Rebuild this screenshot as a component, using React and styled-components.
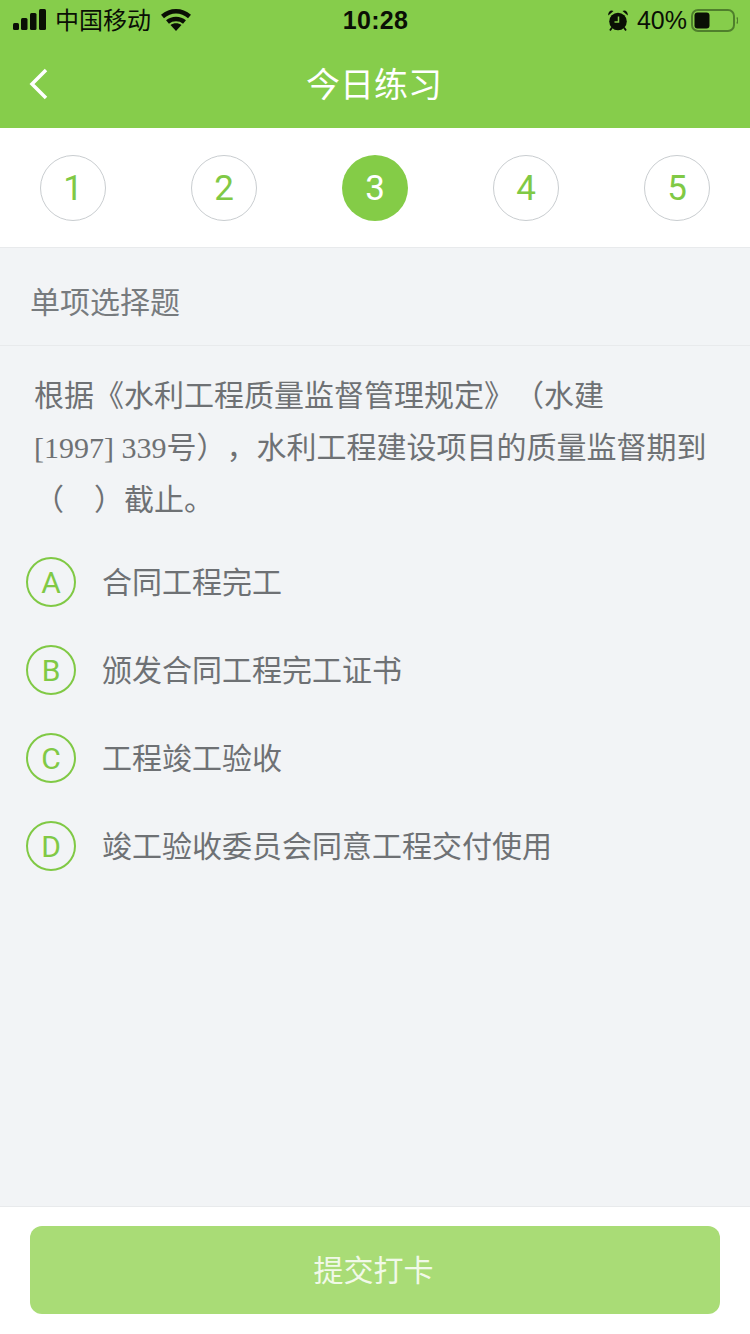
import React from "react";
import styled, { createGlobalStyle } from "styled-components";

const GlobalStyle = createGlobalStyle`
	html, body {
		margin: 0;
		padding: 0;
		background: #f2f4f6;
	}
	body {
		font-family: "Liberation Sans", "Noto Sans CJK SC", sans-serif;
		text-spacing-trim: space-all;
	}
`;

const Page = styled.div`
	width: 750px;
	height: 1334px;
	display: flex;
	flex-direction: column;
	background: #f2f4f6;
	overflow: hidden;
`;

const Header = styled.header`
	height: 128px;
	flex: none;
	background: #86cd4b;
	display: flex;
	flex-direction: column;
`;

const StatusBar = styled.div`
	height: 40px;
	display: grid;
	grid-template-columns: 1fr auto 1fr;
	align-items: center;
	padding: 0 12px 0 13px;
	color: #0a0f05;
`;

const StatusLeft = styled.div`
	display: flex;
	align-items: center;
	gap: 9px;
	font-size: 24px;
`;

const Carrier = styled.span`
	padding-bottom: 4px;
	margin-right: 1px;
`;

const StatusRight = styled.div`
	display: flex;
	align-items: center;
	justify-content: flex-end;
	font-size: 25px;
`;

const Percent = styled.span`
	margin: 0 4px 0 9px;
`;

const Clock = styled.div`
	font-size: 25px;
	font-weight: 700;
	letter-spacing: 0.3px;
`;

const NavBar = styled.div`
	flex: 1;
	position: relative;
	display: flex;
	align-items: center;
	justify-content: center;
	padding: 0 2px 4px 0;
`;

const BackButton = styled.svg`
	position: absolute;
	left: 28px;
	top: 28px;
`;

const Title = styled.h1`
	margin: 0;
	font-size: 34px;
	font-weight: 400;
	color: #fff;
`;

const Steps = styled.div`
	height: 120px;
	flex: none;
	box-sizing: border-box;
	background: #fff;
	border-bottom: 1px solid #e8eaec;
	display: flex;
	align-items: center;
	justify-content: space-between;
	padding: 1px 40px 0;
`;

const Step = styled.div`
	width: 66px;
	height: 66px;
	box-sizing: border-box;
	border-radius: 50%;
	border: ${(p) => (p.$active ? "none" : "1px solid #c9cdd0")};
	background: ${(p) => (p.$active ? "#84cc47" : "#fff")};
	color: ${(p) => (p.$active ? "#fff" : "#80c945")};
	display: flex;
	align-items: center;
	justify-content: center;
	font-family: Roboto, "Liberation Sans", sans-serif;
	font-size: 35px;
	font-weight: 400;
`;

const SectionLabel = styled.div`
	height: 98px;
	flex: none;
	box-sizing: border-box;
	border-bottom: 1px solid #e8eaec;
	padding: 7px 30px 0;
	display: flex;
	align-items: center;
	font-size: 30px;
	color: #777b7e;
`;

const Question = styled.p`
	margin: 0;
	padding: 24px 34px 0;
	font-family: "Liberation Serif", "Noto Sans CJK SC", serif;
	font-size: 30px;
	line-height: 52px;
	color: #6e7174;
`;

const Options = styled.div`
	display: flex;
	flex-direction: column;
	gap: 38px;
	padding: 31px 26px 0;
`;

const Option = styled.div`
	display: flex;
	align-items: center;
	gap: 26px;
	height: 50px;
`;

const Letter = styled.div`
	width: 50px;
	height: 50px;
	box-sizing: border-box;
	border: 2px solid #80c945;
	border-radius: 50%;
	color: #80c945;
	display: flex;
	align-items: center;
	justify-content: center;
	font-family: Roboto, "Liberation Sans", sans-serif;
	font-size: 30px;
	font-weight: 400;
`;

const OptionText = styled.div`
	font-size: 30px;
	color: #6e7174;
	padding-bottom: 4px;
`;

const Footer = styled.footer`
	margin-top: auto;
	height: 128px;
	flex: none;
	box-sizing: border-box;
	background: #fff;
	border-top: 1px solid #e8eaec;
	padding: 19px 30px 0;
`;

const SubmitButton = styled.button`
	width: 100%;
	height: 88px;
	border: none;
	border-radius: 12px;
	background: #a9dc76;
	color: #f1f9e8;
	font-family: inherit;
	font-size: 30px;
	padding: 0 3px 4px 0;
`;

const steps = [1, 2, 3, 4, 5];
const options = [
	["A", "合同工程完工"],
	["B", "颁发合同工程完工证书"],
	["C", "工程竣工验收"],
	["D", "竣工验收委员会同意工程交付使用"],
];

function SignalIcon() {
	return (
		<svg width="33" height="22" viewBox="0 0 33 22" fill="#0a0f05">
			<rect x="0" y="14" width="6" height="7" rx="1.5" />
			<rect x="8" y="9" width="6.500" height="12" rx="1.5" />
			<rect x="17" y="4" width="6.500" height="17" rx="1.5" />
			<rect x="26" y="0" width="7" height="21" rx="1.5" />
		</svg>
	);
}

function WifiIcon() {
	return (
		<svg width="30" height="22" viewBox="0 0 30 22" fill="none" stroke="#0a0f05" strokeWidth="4.500">
			<path d="M1.500 7.500C9.500.5 20.500.5 28.500 7.500" />
			<path d="M6.500 13c4.800-4 12.200-4 17 0" />
			<path d="M15 22l-5.500-6c3-2.200 8-2.200 11 0z" fill="#0a0f05" stroke="none" />
		</svg>
	);
}

function AlarmIcon() {
	return (
		<svg width="20" height="21" viewBox="0 0 20 21" fill="#0a0f05">
			<circle cx="10" cy="11.500" r="8.800" />
			<path d="M.3 5.500 5.500 1C2.800-.8-.3 1.800.3 5.500zM19.700 5.500 14.500 1C17.200-.8 20.300 1.800 19.700 5.500z" />
			<path d="M4 17.500l-2 3M16 17.500l2 3" stroke="#0a0f05" strokeWidth="1.800" />
			<path d="M10.500 6.500v5.500H6.500" fill="none" stroke="#86cd4b" strokeWidth="1.500" />
		</svg>
	);
}

function BatteryIcon() {
	return (
		<svg width="47" height="23" viewBox="0 0 47 23" fill="none">
			<rect x="1" y="1" width="42" height="21" rx="6" stroke="#4f7f2c" strokeWidth="2" />
			<rect x="3.500" y="3.500" width="15" height="16" rx="3" fill="#0a0f05" />
			<path d="M46 8.500c.8 1.500.8 4.500 0 6" stroke="#4f7f2c" strokeWidth="1.500" />
		</svg>
	);
}

export default function App() {
	return (
		<Page>
			<GlobalStyle />
			<Header>
				<StatusBar>
					<StatusLeft>
						<SignalIcon />
						<Carrier>中国移动</Carrier>
						<WifiIcon />
					</StatusLeft>
					<Clock>10:28</Clock>
					<StatusRight>
						<AlarmIcon />
						<Percent>40%</Percent>
						<BatteryIcon />
					</StatusRight>
				</StatusBar>
				<NavBar>
					<BackButton width="22" height="32" viewBox="0 0 22 32" fill="none" stroke="#fff" strokeWidth="3.500">
						<path d="M18 2 4 16l14 14" />
					</BackButton>
					<Title>今日练习</Title>
				</NavBar>
			</Header>
			<Steps>
				{steps.map((n) => (
					<Step key={n} $active={n === 3}>
						{n}
					</Step>
				))}
			</Steps>
			<SectionLabel>单项选择题</SectionLabel>
			<Question>
				根据《水利工程质量监督管理规定》（水建
				<br />
				[1997] 339号），水利工程建设项目的质量监督期到
				<br />
				（　）截止。
			</Question>
			<Options>
				{options.map(([letter, text]) => (
					<Option key={letter}>
						<Letter>{letter}</Letter>
						<OptionText>{text}</OptionText>
					</Option>
				))}
			</Options>
			<Footer>
				<SubmitButton>提交打卡</SubmitButton>
			</Footer>
		</Page>
	);
}
